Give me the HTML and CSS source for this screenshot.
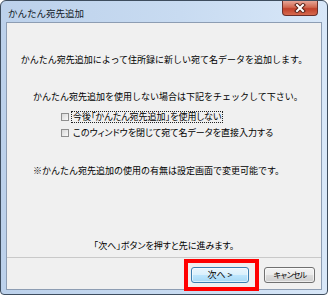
FILE: index.html
```html
<!DOCTYPE html>
<html lang="ja">
<head>
    <meta charset="UTF-8">
    <title>かんたん宛先追加</title>
    <link rel="stylesheet" href="styles.css">
</head>
<body>
    <div class="window">
        <div class="titlebar">
            <span class="title">かんたん宛先追加</span>
            <span class="close">
                <svg width="14" height="10" viewBox="0 0 14 10">
                    <path d="M4 2 L10 8 M10 2 L4 8" stroke="#5a2318" stroke-width="4" stroke-linecap="square"/>
                    <path d="M4 2 L10 8 M10 2 L4 8" stroke="#fff" stroke-width="2" stroke-linecap="square"/>
                </svg>
            </span>
        </div>
        <div class="client">
            <p class="lead">かんたん宛先追加によって住所録に新しい宛て名データを追加します。</p>
            <p class="intro">かんたん宛先追加を使用しない場合は下記をチェックして下さい。</p>
            <label class="check">
                <span class="box"></span>
                <span class="focus">今後「かんたん宛先追加」を使用しない</span>
            </label>
            <label class="check">
                <span class="box"></span>
                <span class="label">このウィンドウを閉じて宛て名データを直接入力する</span>
            </label>
            <p class="note">※かんたん宛先追加の使用の有無は設定画面で変更可能です。</p>
            <div class="spacer"></div>
            <p class="prompt">「次へ」ボタンを押すと先に進みます。</p>
            <div class="actions">
                <button class="btn btn-next">次へ &gt;</button>
                <button class="btn btn-cancel">キャンセル</button>
            </div>
        </div>
    </div>
</body>
</html>
```

FILE: styles.css
```css
body {
    margin: 0;
    width: 328px;
    height: 296px;
    background-color: #fff;
    font-family: "Noto Sans CJK JP", "Noto Sans", sans-serif;
    color: #000;
}
.window {
    box-sizing: border-box;
    height: 295px;
    display: flex;
    flex-direction: column;
    padding: 0 5px 4px 5px;
    border: 1px solid #3e4d5e;
    border-radius: 6px 6px 4px 4px;
    background: linear-gradient(to right, #bcd1eb, #c8dbf1 55%, #d8e7f8); /* Aero風の枠 */
}
.titlebar {
    height: 21px;
    display: flex;
    align-items: flex-start;
}
.title {
    margin: 6px 0 0 2px;
    font-size: 9.5px;
    line-height: 12px;
    color: #111a26;
}
.close {
    margin-left: auto;
    margin-right: 4px;
    width: 36px;
    height: 15px;
    display: flex;
    align-items: center;
    justify-content: center;
    border: 1px solid #6b2f2a;
    border-top: none;
    border-radius: 0 0 4px 4px;
    background: linear-gradient(#e7a597, #d0674f 45%, #c0402a 55%, #d66a4f);
    box-sizing: border-box;
}
.client {
    flex: 1;
    display: flex;
    flex-direction: column;
    padding-top: 31px;
    background-color: #f0f0f0;
    border: 1px solid #8d9db3;
    font-size: 9px;
    line-height: 12px;
}
.client p {
    margin: 0;
    white-space: nowrap;
}
.lead {
    text-align: center;
}
.intro {
    margin-top: 25px !important;
    padding-left: 26px;
}
.check {
    display: flex;
    align-items: center;
    height: 12px;
    padding-left: 54px;
    white-space: nowrap;
    font-feature-settings: "palt";
}
.check:first-of-type {
    margin-top: 8px;
}
.check + .check {
    margin-top: 4px;
}
.box {
    width: 8px;
    height: 8px;
    box-sizing: border-box;
    margin-right: 2px;
    border: 1px solid #8f8f8f;
    background: linear-gradient(135deg, #d8d8d8, #fafafa);
}
.focus {
    padding: 0 1px;
    border: 1px dotted #222;
    line-height: 10px;
}
.label {
    padding-left: 2px;
}
.note {
    margin-top: 26px !important;
    padding-left: 26px;
}
.spacer {
    flex: 1;
}
.prompt {
    margin-bottom: 5px !important;
    text-align: center;
    font-feature-settings: "palt";
}
.actions {
    display: flex;
    justify-content: flex-end;
    gap: 15px;
    padding: 9px 6px 6px 0;
    border-top: 1px solid #c9c9c9;
}
.btn {
    height: 16px;
    box-sizing: border-box;
    padding: 0;
    font-family: inherit;
    font-size: 9px;
    line-height: 12px;
    color: #000;
    border-radius: 3px;
}
.btn-next {
    position: relative;
    width: 58px;
    border: 1px solid #3c7fb1;
    background: linear-gradient(#eaf6fd, #d9f0fc 50%, #bee6fd 50%, #a7d9f5);
    box-shadow: inset 0 0 0 1px rgba(255, 255, 255, 0.6);
}
.btn-next::after {
    content: "";
    position: absolute;
    top: -9px;
    left: -8px;
    right: -11px;
    bottom: -9px;
    border: 4px solid #f00; /* 注目枠 */
}
.btn-cancel {
    width: 51px;
    border: 1px solid #707070;
    background: linear-gradient(#f2f2f2, #ebebeb 50%, #dddddd 50%, #cfcfcf);
    box-shadow: inset 0 0 0 1px rgba(255, 255, 255, 0.6);
    letter-spacing: -1.5px;
    font-size: 8px;
}
```
